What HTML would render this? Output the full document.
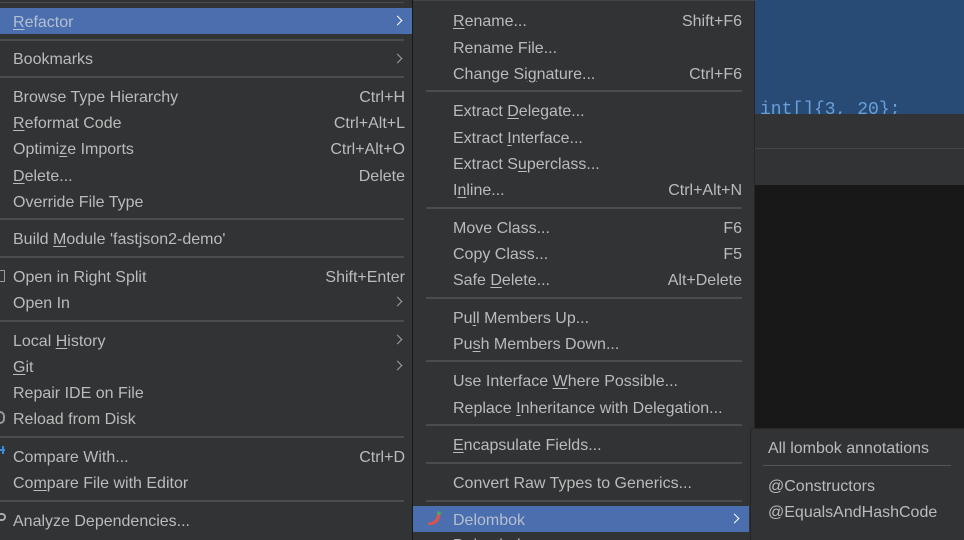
<!DOCTYPE html>
<html><head><meta charset="utf-8"><style>
*{margin:0;padding:0;box-sizing:border-box}
html,body{width:964px;height:540px;overflow:hidden}
body{background:#181818;font-family:"Liberation Sans",sans-serif;font-size:16px;color:#bbbbbb}
#w{position:relative;width:964px;height:540px;overflow:hidden}
.abs{position:absolute}
.t{position:absolute;line-height:20px;white-space:nowrap;margin-top:2px}
.k{position:absolute;line-height:20px;white-space:nowrap;text-align:right;margin-top:2px}
.sep{position:absolute;height:2px;background:#4a4c4e}
u{text-decoration:underline;text-underline-offset:2px}
.arr{position:absolute;width:7px;height:7px;border-right:1.6px solid #a0a0a0;border-top:1.6px solid #a0a0a0;transform:rotate(45deg)}
</style></head><body><div id="w">
<div class="abs" style="left:755px;top:0;width:209px;height:114px;background:#274b74"></div>
<div class="abs" style="left:760px;top:100px;width:204px;height:14px;overflow:hidden"><div style="color:#6a9fd8;font-family:'Liberation Mono',monospace;font-size:18px;line-height:20px">int[]{3, 20};</div></div>
<div class="abs" style="left:755px;top:114px;width:209px;height:71px;background:#323335"></div>
<div class="abs" style="left:755px;top:148px;width:209px;height:1px;background:#454749"></div>

<div class="abs" style="left:0;top:0;width:412px;height:540px;background:#313335"></div>
<div class="sep" style="left:0;top:2px;width:404px;height:1px"></div>
<div class="abs" style="left:0;top:8px;width:412px;height:26px;background:#4b6eaf"></div>
<div class="t" style="left:13px;top:11px;color:#b5bfd0"><u>R</u>efactor</div><div class="arr" style="left:394px;top:17px;border-color:#fff"></div>
<div class="sep" style="left:0;top:39px;width:404px"></div>
<div class="t" style="left:13px;top:48px">Bookmarks</div><div class="arr" style="left:394px;top:55px"></div>
<div class="sep" style="left:0;top:76px;width:404px"></div>
<div class="t" style="left:13px;top:86px">Browse Type Hierarchy</div><div class="k" style="right:559px;top:86px">Ctrl+H</div>
<div class="t" style="left:13px;top:112px"><u>R</u>eformat Code</div><div class="k" style="right:559px;top:112px">Ctrl+Alt+L</div>
<div class="t" style="left:13px;top:138px">Optimi<u>z</u>e Imports</div><div class="k" style="right:559px;top:138px">Ctrl+Alt+O</div>
<div class="t" style="left:13px;top:165px"><u>D</u>elete...</div><div class="k" style="right:559px;top:165px">Delete</div>
<div class="t" style="left:13px;top:191px">Override File Type</div>
<div class="sep" style="left:0;top:218px;width:404px"></div>
<div class="t" style="left:13px;top:228px">Build <u>M</u>odule 'fastjson2-demo'</div>
<div class="sep" style="left:0;top:256px;width:404px"></div>
<div class="abs" style="left:0;top:270px;width:5px;height:12px;border:1px solid #999;border-left:none"></div>
<div class="t" style="left:13px;top:266px">Open in Right Split</div><div class="k" style="right:559px;top:266px">Shift+Enter</div>
<div class="t" style="left:13px;top:292px">Open In</div><div class="arr" style="left:394px;top:298px"></div>
<div class="sep" style="left:0;top:320px;width:404px"></div>
<div class="t" style="left:13px;top:330px">Local <u>H</u>istory</div><div class="arr" style="left:394px;top:336px"></div>
<div class="t" style="left:13px;top:356px"><u>G</u>it</div><div class="arr" style="left:394px;top:362px"></div>
<div class="t" style="left:13px;top:382px">Repair IDE on File</div>
<div class="t" style="left:13px;top:408px">Reload from Disk</div>
<div class="abs" style="left:0;top:411px;width:5px;height:13px;border:2px solid #999;border-left:none;border-radius:0 6px 6px 0"></div>
<div class="sep" style="left:0;top:436px;width:404px"></div>
<div class="abs" style="left:0;top:449px;width:5px;height:2px;background:#3d8ee0"></div><div class="abs" style="left:2px;top:446px;width:2px;height:8px;background:#3d8ee0"></div>
<div class="t" style="left:13px;top:446px">Compare With...</div><div class="k" style="right:559px;top:446px">Ctrl+D</div>
<div class="t" style="left:13px;top:472px">Co<u>m</u>pare File with Editor</div>
<div class="sep" style="left:0;top:500px;width:404px"></div>
<div class="abs" style="left:0;top:513px;width:6px;height:8px;border:2px solid #aaa;border-left:none;border-radius:0 5px 5px 0"></div>
<div class="t" style="left:13px;top:510px">Analyze Dependencies...</div>

<div class="abs" style="left:413px;top:0;width:342px;height:540px;background:#313335;border-right:1px solid #262626"></div>
<div class="abs" style="left:413px;top:0;width:342px;height:1px;background:#444"></div>
<div class="t" style="left:453px;top:10px"><u>R</u>ename...</div><div class="k" style="right:222px;top:10px">Shift+F6</div>
<div class="t" style="left:453px;top:37px">Rename File...</div>
<div class="t" style="left:453px;top:63px">Change Si<u>g</u>nature...</div><div class="k" style="right:222px;top:63px">Ctrl+F6</div>
<div class="sep" style="left:426px;top:90px;width:316px"></div>
<div class="t" style="left:453px;top:100px">Extract <u>D</u>elegate...</div>
<div class="t" style="left:453px;top:127px">Extract <u>I</u>nterface...</div>
<div class="t" style="left:453px;top:153px">Extract S<u>u</u>perclass...</div>
<div class="t" style="left:453px;top:179px">I<u>n</u>line...</div><div class="k" style="right:222px;top:179px">Ctrl+Alt+N</div>
<div class="sep" style="left:426px;top:207px;width:316px"></div>
<div class="t" style="left:453px;top:217px">Move Class...</div><div class="k" style="right:222px;top:217px">F6</div>
<div class="t" style="left:453px;top:243px">Copy Class...</div><div class="k" style="right:222px;top:243px">F5</div>
<div class="t" style="left:453px;top:269px">Safe <u>D</u>elete...</div><div class="k" style="right:222px;top:269px">Alt+Delete</div>
<div class="sep" style="left:426px;top:297px;width:316px"></div>
<div class="t" style="left:453px;top:307px">Pu<u>l</u>l Members Up...</div>
<div class="t" style="left:453px;top:333px">Pu<u>s</u>h Members Down...</div>
<div class="sep" style="left:426px;top:360px;width:316px"></div>
<div class="t" style="left:453px;top:370px">Use Interface <u>W</u>here Possible...</div>
<div class="t" style="left:453px;top:397px">Replace <u>I</u>nheritance with Delegation...</div>
<div class="sep" style="left:426px;top:424px;width:316px"></div>
<div class="t" style="left:453px;top:434px"><u>E</u>ncapsulate Fields...</div>
<div class="sep" style="left:426px;top:462px;width:316px"></div>
<div class="t" style="left:453px;top:472px">Convert Raw Types to Generics...</div>
<div class="sep" style="left:426px;top:500px;width:316px"></div>
<div class="abs" style="left:413px;top:506px;width:336px;height:26px;background:#4b6eaf"></div>
<svg class="abs" style="left:426px;top:508px" width="20" height="20" viewBox="0 0 20 20"><path d="M2 17 C9 18 15 13 14 6 L11 6 C11 11 8 14 2 15 Z" fill="#d9534f"/><path d="M11 6 L12 2 L14 5 L16 4 L14 7 Z" fill="#4caf50"/></svg>
<div class="t" style="left:453px;top:509px;color:#b5bfd0">Delombok</div><div class="arr" style="left:731px;top:515px;border-color:#fff"></div>
<div class="t" style="left:453px;top:534px">Delombok</div>

<div class="abs" style="left:750px;top:428px;width:214px;height:112px;background:#313335;border-left:1px solid #262626;border-top:1px solid #262626"></div>
<div class="t" style="left:768px;top:437px">All lombok annotations</div>
<div class="sep" style="left:763px;top:465px;width:188px;height:1px;background:#555"></div>
<div class="t" style="left:768px;top:475px">@Constructors</div>
<div class="t" style="left:768px;top:501px">@EqualsAndHashCode</div>
</div></body></html>
